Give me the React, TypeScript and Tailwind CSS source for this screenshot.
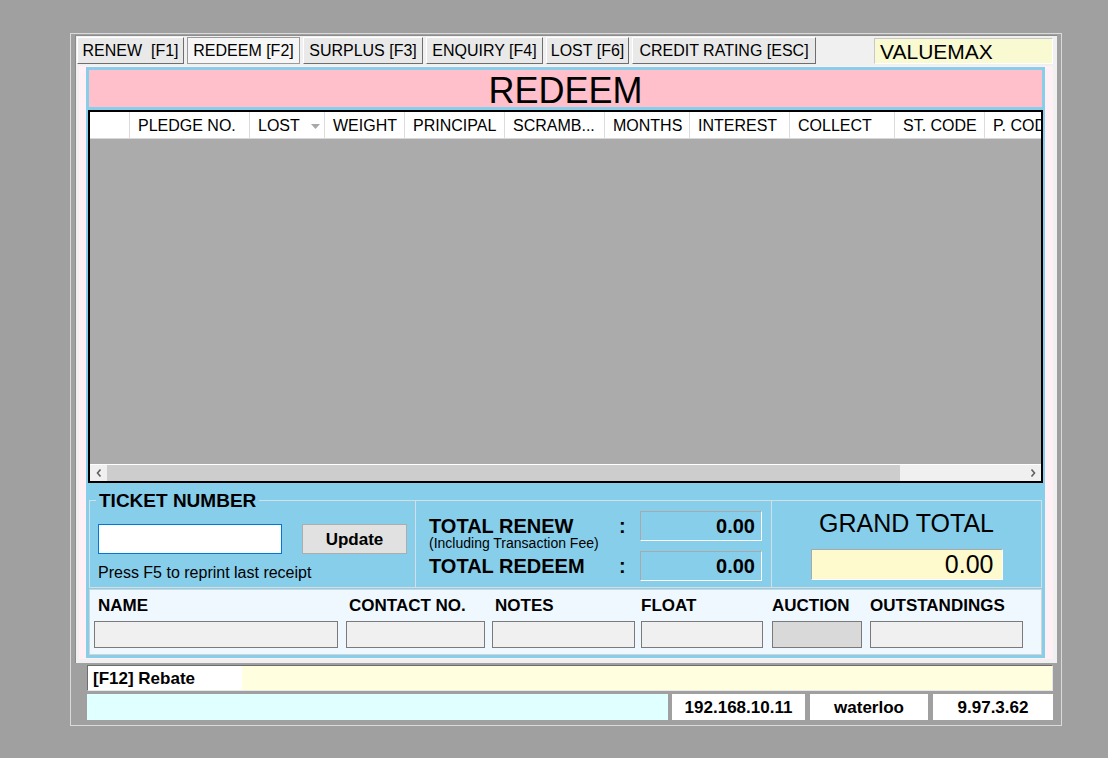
import React from "react";

type Col = { w: string; label: string; arrow?: boolean };

const cols: Col[] = [
  { w: "w-[40px]", label: "" },
  { w: "w-[120px]", label: "PLEDGE NO." },
  { w: "w-[75px]", label: "LOST", arrow: true },
  { w: "w-[80px]", label: "WEIGHT" },
  { w: "w-[100px]", label: "PRINCIPAL" },
  { w: "w-[100px]", label: "SCRAMB..." },
  { w: "w-[85px]", label: "MONTHS" },
  { w: "w-[100px]", label: "INTEREST" },
  { w: "w-[105px]", label: "COLLECT" },
  { w: "w-[90px]", label: "ST. CODE" },
  { w: "w-[100px]", label: "P. CODE" },
];

function Tab({ label, w, active }: { label: string; w: string; active?: boolean }) {
  return (
    <div
      className={`${w} h-[27px] shrink-0 flex items-center justify-center whitespace-pre text-[16px] leading-none border ${
        active
          ? "bg-[#f6f6f6] border-[#9a9a9a]"
          : "bg-[#e9e9e9] border-t-white border-l-white border-r-[#6e6e6e] border-b-[#6e6e6e]"
      }`}
    >
      {label}
    </div>
  );
}

function Field({ label, w, ml, lpl, bg }: { label: string; w: string; ml: string; lpl: string; bg?: string }) {
  return (
    <div className={`flex flex-col ${ml}`}>
      <div className={`h-[20px] leading-[20px] text-[17px] font-bold whitespace-nowrap ${lpl}`}>{label}</div>
      <div className={`${w} h-[27px] mt-[5px] border border-[#7a7a7a] ${bg ?? "bg-[#f0f0f0]"}`} />
    </div>
  );
}

export default function App() {
  return (
    <div className="w-[1108px] h-[758px] bg-[#a0a0a0] pt-[33px] pl-[70px] font-['Liberation_Sans',Arial,sans-serif] text-black overflow-hidden">
      {/* outer frame */}
      <div className="w-[992px] h-[693px] border border-[#dadada] flex flex-col">
        {/* main panel */}
        <div className="ml-[4px] mt-[1px] w-[982px] h-[628px] bg-[#f0f0f0] border-l border-t border-[#8c8c8c] flex flex-col">
          {/* tabs */}
          <div className="flex items-start pl-[1px] pt-[1px] h-[28px]">
            <div className="flex gap-[3px]">
              <Tab label="RENEW  [F1]" w="w-[107px]" />
              <Tab label="REDEEM [F2]" w="w-[113px]" active />
              <Tab label="SURPLUS [F3]" w="w-[120px]" />
              <Tab label="ENQUIRY [F4]" w="w-[117px]" />
              <Tab label="LOST [F6]" w="w-[83px]" />
              <Tab label="CREDIT RATING [ESC]" w="w-[184px]" />
            </div>
            <div className="ml-auto mr-[4px] mt-[1px] w-[179px] h-[26px] bg-[#fafad2] border border-t-[#c8c8c8] border-l-[#c8c8c8] border-r-white border-b-white pl-[5px] text-[21px] leading-[25px]">
              VALUEMAX
            </div>
          </div>

          {/* lavender area */}
          <div className="ml-[3px] mt-[2px] w-[974px] bg-[#fff0f5] pl-[7px] pt-[1px] pb-[1px]">
            <div className="w-[959px] h-[591px] border-[3px] border-[#87ceeb] bg-[#87ceeb] flex flex-col">
              {/* header */}
              <div className="h-[37px] bg-[#ffc0cb] flex items-center justify-center pt-[4px] text-[36px] leading-none">
                REDEEM
              </div>

              {/* grid */}
              <div className="mt-[3px] -mx-px h-[373px] border-2 border-black bg-[#ababab] flex flex-col">
                <div className="h-[27px] bg-white border-b border-[#d8d8d8] flex overflow-hidden shrink-0">
                  {cols.map((c, i) => (
                    <div
                      key={i}
                      className={`${c.w} shrink-0 h-full border-r border-[#dcdcdc] pl-[8px] pt-[2px] flex items-center text-[16px] leading-none whitespace-nowrap relative`}
                    >
                      {c.label}
                      {c.arrow && (
                        <svg className="ml-auto mr-[4px]" width="9" height="5" viewBox="0 0 9 5">
                          <polygon points="0,0 9,0 4.5,5" fill="#a8a8a8" />
                        </svg>
                      )}
                    </div>
                  ))}
                </div>
                <div className="flex-1" />
                <div className="h-[17px] bg-[#f0f0f0] border-t border-white flex items-center shrink-0">
                  <div className="w-[17px] h-full flex items-center justify-center">
                    <svg width="6" height="8" viewBox="0 0 6 8">
                      <polyline points="4.5,0.5 1.5,4 4.5,7.5" fill="none" stroke="#606060" strokeWidth="1.6" />
                    </svg>
                  </div>
                  <div className="w-[793px] h-full bg-[#cdcdcd]" />
                  <div className="flex-1" />
                  <div className="w-[17px] h-full flex items-center justify-center">
                    <svg width="6" height="8" viewBox="0 0 6 8">
                      <polyline points="1.5,0.5 4.5,4 1.5,7.5" fill="none" stroke="#606060" strokeWidth="1.6" />
                    </svg>
                  </div>
                </div>
              </div>

              {/* totals area */}
              <div className="mt-[17px] h-[88px] border border-[#d2dfe4] flex">
                {/* ticket number */}
                <div className="w-[326px] h-full border-r border-[#d2dfe4] relative pl-[8px] pt-[23px]">
                  <span className="absolute left-[6px] -top-[11px] px-[3px] bg-[#87ceeb] text-[19px] font-bold leading-[22px] whitespace-nowrap">
                    TICKET NUMBER
                  </span>
                  <div className="flex items-center">
                    <div className="w-[184px] h-[30px] bg-white border border-[#0078d7]" />
                    <div className="ml-[20px] w-[105px] h-[30px] bg-[#e1e1e1] border border-[#adadad] flex items-center justify-center text-[17px] font-bold leading-none">
                      Update
                    </div>
                  </div>
                  <div className="mt-[10px] text-[16px] leading-[18px] whitespace-nowrap">Press F5 to reprint last receipt</div>
                </div>

                {/* totals */}
                <div className="w-[356px] h-full border-r border-[#d2dfe4] flex pl-[13px]">
                  <div className="w-[190px] flex flex-col pt-[15px]">
                    <div className="text-[20px] font-bold leading-[20px] whitespace-nowrap">TOTAL RENEW</div>
                    <div className="text-[14px] leading-[14px] whitespace-nowrap">(Including Transaction Fee)</div>
                    <div className="mt-[6px] text-[20px] font-bold leading-[20px] whitespace-nowrap">TOTAL REDEEM</div>
                  </div>
                  <div className="w-[21px] flex flex-col pt-[15px] text-[20px] font-bold leading-[20px]">
                    <div>:</div>
                    <div className="mt-[20px]">:</div>
                  </div>
                  <div className="flex flex-col pt-[10px]">
                    <div className="w-[122px] h-[30px] border border-t-[#a9a9a9] border-l-[#a9a9a9] border-r-white border-b-white flex items-center justify-end pr-[6px] text-[20px] font-bold leading-none">
                      0.00
                    </div>
                    <div className="mt-[10px] w-[122px] h-[30px] border border-t-[#a9a9a9] border-l-[#a9a9a9] border-r-white border-b-white flex items-center justify-end pr-[6px] text-[20px] font-bold leading-none">
                      0.00
                    </div>
                  </div>
                </div>

                {/* grand total */}
                <div className="flex-1 flex flex-col items-center pt-[8px]">
                  <div className="text-[25px] leading-[28px] whitespace-nowrap">GRAND TOTAL</div>
                  <div className="mt-[12px] w-[192px] h-[31px] bg-[#fffacd] border border-t-[#a9a9a9] border-l-[#a9a9a9] border-r-white border-b-white flex items-center justify-end pr-[8px] text-[25px] leading-none">
                    0.00
                  </div>
                </div>
              </div>

              {/* customer info */}
              <div className="mt-px h-[66px] border border-[#d3d3d3] bg-[#f0f8ff] flex pl-[4px] pt-[6px]">
                <Field label="NAME" w="w-[244px]" ml="" lpl="pl-[4px]" />
                <Field label="CONTACT NO." w="w-[139px]" ml="ml-[8px]" lpl="pl-[3px]" />
                <Field label="NOTES" w="w-[143px]" ml="ml-[7px]" lpl="pl-[3px]" />
                <Field label="FLOAT" w="w-[122px]" ml="ml-[6px]" lpl="" />
                <Field label="AUCTION" w="w-[90px]" ml="ml-[9px]" lpl="" bg="bg-[#d9d9d9]" />
                <Field label="OUTSTANDINGS" w="w-[153px]" ml="ml-[8px]" lpl="" />
              </div>
            </div>
          </div>
        </div>

        {/* rebate row */}
        <div className="ml-[16px] mt-[2px] w-[966px] h-[26px] flex border border-t-[#6d6d6d] border-l-[#6d6d6d] border-r-[#e8e8e8] border-b-[#e8e8e8]">
          <div className="w-[154px] h-full bg-white pl-[5px] flex items-center text-[17px] font-bold leading-none whitespace-nowrap">
            [F12] Rebate
          </div>
          <div className="flex-1 h-full bg-[#ffffe0]" />
        </div>

        {/* status row */}
        <div className="ml-[16px] mt-[3px] h-[26px] flex">
          <div className="w-[581px] h-full bg-[#e0ffff]" />
          <div className="ml-[4px] w-[133px] h-full bg-white flex items-center justify-center text-[17px] font-bold leading-none">
            192.168.10.11
          </div>
          <div className="ml-[5px] w-[118px] h-full bg-white flex items-center justify-center text-[17px] font-bold leading-none">
            waterloo
          </div>
          <div className="ml-[5px] w-[120px] h-full bg-white flex items-center justify-center text-[17px] font-bold leading-none">
            9.97.3.62
          </div>
        </div>
      </div>
    </div>
  );
}
